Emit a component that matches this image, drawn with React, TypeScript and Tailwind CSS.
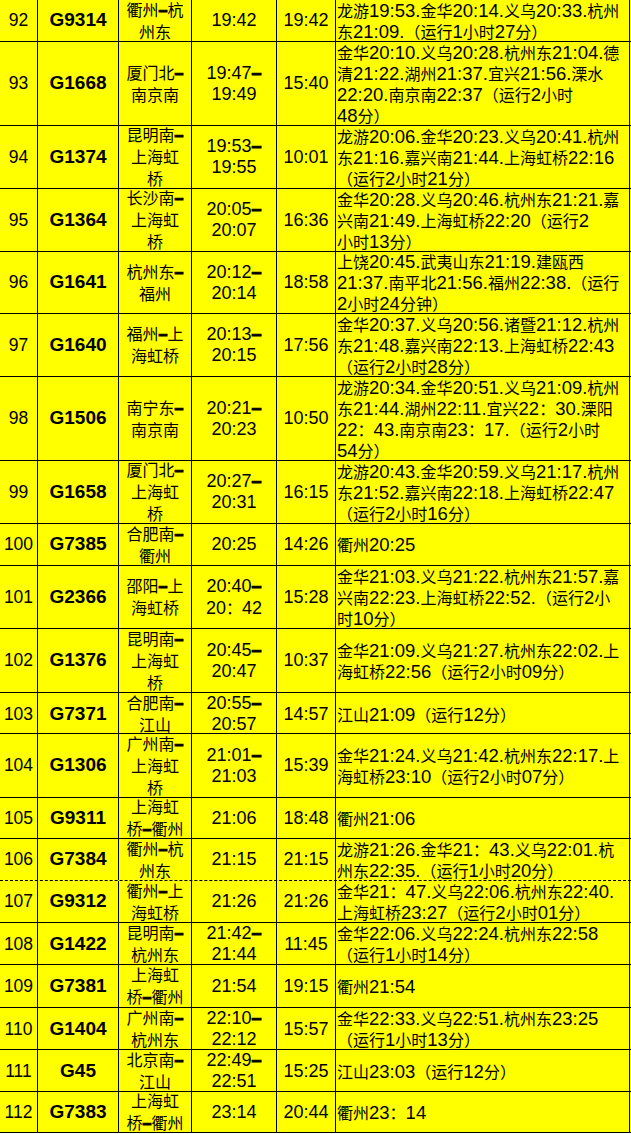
const CJK = /([\u2E80-\u9FFF\uFF00-\uFFEF]+|–)/;

type Row = {
  no: string;
  code: string;
  route: string[];
  time: string[];
  dur: string;
  stops: string[];
  h: string;
  dashed?: boolean;
};

const rows: Row[] = [
  { no: '92', code: 'G9314', route: ['衢州–杭', '州东'], time: ['19:42'], dur: '19:42', h: 'h-[42px]',
    stops: ['龙游19:53.金华20:14.义乌20:33.杭州', '东21:09.（运行1小时27分）'] },
  { no: '93', code: 'G1668', route: ['厦门北–', '南京南'], time: ['19:47–', '19:49'], dur: '15:40', h: 'h-[84px]',
    stops: ['金华20:10.义乌20:28.杭州东21:04.德', '清21:22.湖州21:37.宜兴21:56.溧水', '22:20.南京南22:37（运行2小时', '48分）'] },
  { no: '94', code: 'G1374', route: ['昆明南–', '上海虹', '桥'], time: ['19:53–', '19:55'], dur: '10:01', h: 'h-[63px]',
    stops: ['龙游20:06.金华20:23.义乌20:41.杭州', '东21:16.嘉兴南21:44.上海虹桥22:16', '（运行2小时21分）'] },
  { no: '95', code: 'G1364', route: ['长沙南–', '上海虹', '桥'], time: ['20:05–', '20:07'], dur: '16:36', h: 'h-[63px]',
    stops: ['金华20:28.义乌20:46.杭州东21:21.嘉', '兴南21:49.上海虹桥22:20（运行2', '小时13分）'] },
  { no: '96', code: 'G1641', route: ['杭州东–', '福州'], time: ['20:12–', '20:14'], dur: '18:58', h: 'h-[62px]',
    stops: ['上饶20:45.武夷山东21:19.建瓯西', '21:37.南平北21:56.福州22:38.（运行', '2小时24分钟）'] },
  { no: '97', code: 'G1640', route: ['福州–上', '海虹桥'], time: ['20:13–', '20:15'], dur: '17:56', h: 'h-[63px]',
    stops: ['金华20:37.义乌20:56.诸暨21:12.杭州', '东21:48.嘉兴南22:13.上海虹桥22:43', '（运行2小时28分）'] },
  { no: '98', code: 'G1506', route: ['南宁东–', '南京南'], time: ['20:21–', '20:23'], dur: '10:50', h: 'h-[84px]',
    stops: ['龙游20:34.金华20:51.义乌21:09.杭州', '东21:44.湖州22:11.宜兴22：30.溧阳', '22：43.南京南23：17.（运行2小时', '54分）'] },
  { no: '99', code: 'G1658', route: ['厦门北–', '上海虹', '桥'], time: ['20:27–', '20:31'], dur: '16:15', h: 'h-[63px]',
    stops: ['龙游20:43.金华20:59.义乌21:17.杭州', '东21:52.嘉兴南22:18.上海虹桥22:47', '（运行2小时16分）'] },
  { no: '100', code: 'G7385', route: ['合肥南–', '衢州'], time: ['20:25'], dur: '14:26', h: 'h-[42px]',
    stops: ['衢州20:25'] },
  { no: '101', code: 'G2366', route: ['邵阳–上', '海虹桥'], time: ['20:40–', '20：42'], dur: '15:28', h: 'h-[63px]',
    stops: ['金华21:03.义乌21:22.杭州东21:57.嘉', '兴南22:23.上海虹桥22:52.（运行2小', '时10分）'] },
  { no: '102', code: 'G1376', route: ['昆明南–', '上海虹', '桥'], time: ['20:45–', '20:47'], dur: '10:37', h: 'h-[64px]',
    stops: ['金华21:09.义乌21:27.杭州东22:02.上', '海虹桥22:56（运行2小时09分）'] },
  { no: '103', code: 'G7371', route: ['合肥南–', '江山'], time: ['20:55–', '20:57'], dur: '14:57', h: 'h-[41px]',
    stops: ['江山21:09（运行12分）'] },
  { no: '104', code: 'G1306', route: ['广州南–', '上海虹', '桥'], time: ['21:01–', '21:03'], dur: '15:39', h: 'h-[64px]',
    stops: ['金华21:24.义乌21:42.杭州东22:17.上', '海虹桥23:10（运行2小时07分）'] },
  { no: '105', code: 'G9311', route: ['上海虹', '桥–衢州'], time: ['21:06'], dur: '18:48', h: 'h-[41px]',
    stops: ['衢州21:06'] },
  { no: '106', code: 'G7384', route: ['衢州–杭', '州东'], time: ['21:15'], dur: '21:15', h: 'h-[42px]', dashed: true,
    stops: ['龙游21:26.金华21：43.义乌22:01.杭', '州东22:35.（运行1小时20分）'] },
  { no: '107', code: 'G9312', route: ['衢州–上', '海虹桥'], time: ['21:26'], dur: '21:26', h: 'h-[42px]',
    stops: ['金华21：47.义乌22:06.杭州东22:40.', '上海虹桥23:27（运行2小时01分）'] },
  { no: '108', code: 'G1422', route: ['昆明南–', '杭州东'], time: ['21:42–', '21:44'], dur: '11:45', h: 'h-[42px]',
    stops: ['金华22:06.义乌22:24.杭州东22:58', '（运行1小时14分）'] },
  { no: '109', code: 'G7381', route: ['上海虹', '桥–衢州'], time: ['21:54'], dur: '19:15', h: 'h-[43px]',
    stops: ['衢州21:54'] },
  { no: '110', code: 'G1404', route: ['广州南–', '杭州东'], time: ['22:10–', '22:12'], dur: '15:57', h: 'h-[42px]',
    stops: ['金华22:33.义乌22:51.杭州东23:25', '（运行1小时13分）'] },
  { no: '111', code: 'G45', route: ['北京南–', '江山'], time: ['22:49–', '22:51'], dur: '15:25', h: 'h-[42px]',
    stops: ['江山23:03（运行12分）'] },
  { no: '112', code: 'G7383', route: ['上海虹', '桥–衢州'], time: ['23:14'], dur: '20:44', h: 'h-[41px]',
    stops: ['衢州23：14'] },
];

// split latin / chinese so the chinese runs can be sized on their own
function Txt({ s }: { s: string }) {
  return (
    <>
      {s
        .split(CJK)
        .filter(Boolean)
        .map((p, i) =>
          p === '–' ? (
            <span key={i} className="font-bold [-webkit-text-stroke:1px_black]">–</span>
          ) : CJK.test(p) ? (
            <span key={i} className="text-[16px] font-['Noto_Sans_CJK_SC',sans-serif]">
              {p}
            </span>
          ) : (
            <span key={i}>{p}</span>
          )
        )}
    </>
  );
}

function TrainRow({ r }: { r: Row }) {
  return (
    <div
      className={`grid grid-cols-[38px_81px_73px_85px_59px_294px] border-b border-black bg-[#ffff00] ${r.h} ${
        r.dashed ? 'border-dashed' : ''
      }`}
    >
      <div className="flex items-center justify-center border-r border-black text-[17.5px]">{r.no}</div>
      <div className="flex items-center justify-center border-r border-black text-[19px] font-bold">{r.code}</div>
      <div className="flex flex-col items-center justify-center overflow-hidden border-r border-black leading-[21px]">
        {r.route.map((l, i) => (
          <div key={i} className="whitespace-nowrap">
            <Txt s={l} />
          </div>
        ))}
      </div>
      <div className="flex flex-col items-center justify-center border-r border-black text-[18px] leading-[21px]">
        {r.time.map((l, i) => (
          <div key={i} className="whitespace-nowrap">
            <Txt s={l} />
          </div>
        ))}
      </div>
      <div className="flex items-center justify-center border-r border-black text-[18px]">{r.dur}</div>
      <div className="flex flex-col justify-center overflow-hidden border-r border-black pl-[1px] text-[18.5px] leading-[21px]">
        {r.stops.map((l, i) => (
          <div key={i} className="whitespace-nowrap">
            <Txt s={l} />
          </div>
        ))}
      </div>
    </div>
  );
}

export default function App() {
  return (
    <div className="w-[631px] bg-white font-['Liberation_Sans','Noto_Sans_CJK_SC',sans-serif] text-black">
      {rows.map((r) => (
        <TrainRow key={r.no} r={r} />
      ))}
    </div>
  );
}
